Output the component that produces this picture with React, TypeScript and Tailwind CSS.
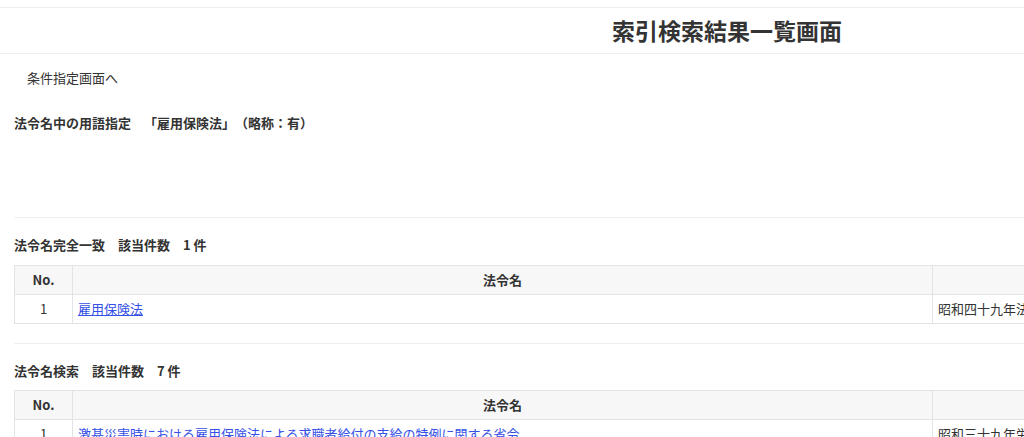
import React from 'react';

type Row = { no: number; name: string; num: string };

const exactRows: Row[] = [
  { no: 1, name: '雇用保険法', num: '昭和四十九年法律第百十六号' },
];

const searchRows: Row[] = [
  { no: 1, name: '激甚災害時における雇用保険法による求職者給付の支給の特例に関する省令', num: '昭和三十九年労働省令第十六号' },
  { no: 2, name: '雇用保険法施行令', num: '昭和五十年政令第二十五号' },
  { no: 3, name: '雇用保険法施行規則', num: '昭和五十年労働省令第三号' },
];

function ResultTable({ rows }: { rows: Row[] }) {
  return (
    <table className="w-full border-collapse text-[13px] text-[#333]">
      <thead>
        <tr className="bg-[#f7f7f7] h-[29px]">
          <th className="w-[58px] border border-[#e3e3e3] font-bold">No.</th>
          <th className="w-[860px] border border-[#e3e3e3] font-bold">法令名</th>
          <th className="border border-[#e3e3e3] font-bold">法令番号</th>
        </tr>
      </thead>
      <tbody>
        {rows.map((r) => (
          <tr key={r.no} className="h-[29px]">
            <td className="border border-[#e3e3e3] text-center">{r.no}</td>
            <td className="border border-[#e3e3e3] px-[5px]">
              <a href="#" className="text-[#3450e6] underline">{r.name}</a>
            </td>
            <td className="border border-[#e3e3e3] px-[5px]">{r.num}</td>
          </tr>
        ))}
      </tbody>
    </table>
  );
}

export default function App() {
  return (
    <div className="w-full overflow-hidden bg-white font-['Noto_Sans_CJK_JP',sans-serif] text-[#333] [text-spacing-trim:space-all]">
      <div className="w-[1454px]">
        {/* Header */}
        <div className="mt-[7px] h-[47px] border-y border-[#efefef] flex items-center justify-center">
          <h1 className="text-[23px] font-bold leading-none text-[#333]">索引検索結果一覧画面</h1>
        </div>

        <div className="mt-[14px] px-[27px] text-[13px] leading-[20px]">条件指定画面へ</div>

        <div className="px-[14px]">
          <div className="mt-[25px] text-[13px] leading-[20px] font-bold">
            法令名中の用語指定　「雇用保険法」（略称：有）
          </div>

          <div className="mt-[84px] border-t border-[#efefef]" />

          <div className="mt-[17px] text-[13px] leading-[20px] font-bold">
            法令名完全一致　該当件数　1 件
          </div>
          <div className="mt-[10px]">
            <ResultTable rows={exactRows} />
          </div>

          <div className="mt-[19px] border-t border-[#efefef]" />

          <div className="mt-[17px] text-[13px] leading-[20px] font-bold">
            法令名検索　該当件数　7 件
          </div>
          <div className="mt-[9px]">
            <ResultTable rows={searchRows} />
          </div>
        </div>
      </div>
    </div>
  );
}
